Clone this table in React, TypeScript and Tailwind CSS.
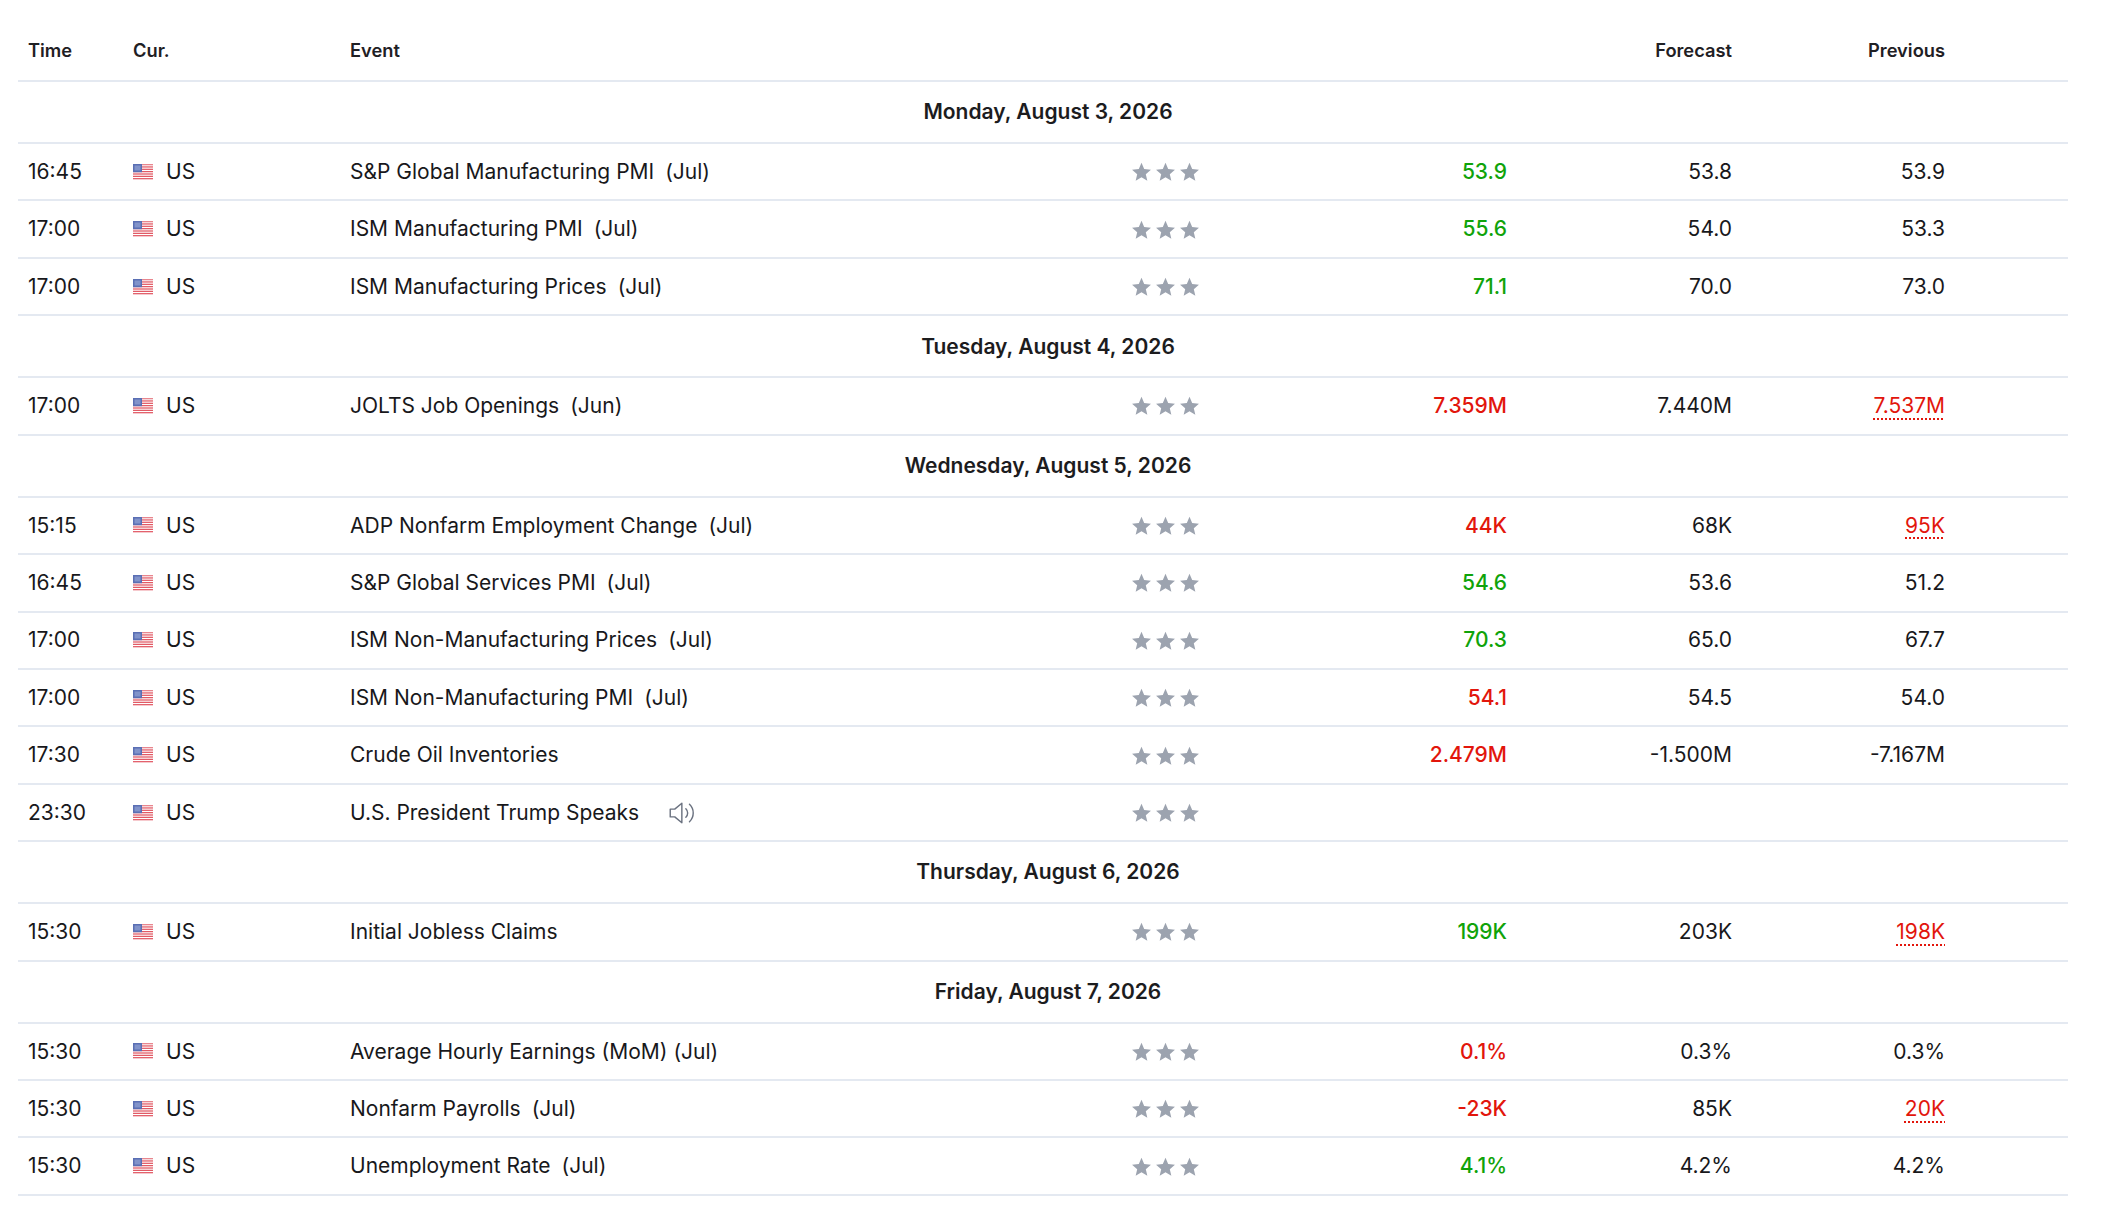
import React from "react";

type Tone = "up" | "down" | "flat";

interface CalendarEvent {
  time: string;
  name: string;
  period?: string;
  tightPeriod?: boolean;
  speech?: boolean;
  actual?: string;
  actualTone?: Tone;
  forecast?: string;
  previous?: string;
  previousRevised?: boolean;
}

interface CalendarDay {
  label: string;
  events: CalendarEvent[];
}

const days: CalendarDay[] = [
  {
    label: "Monday, August 3, 2026",
    events: [
      { time: "16:45", name: "S&P Global Manufacturing PMI", period: "(Jul)", actual: "53.9", actualTone: "up", forecast: "53.8", previous: "53.9" },
      { time: "17:00", name: "ISM Manufacturing PMI", period: "(Jul)", actual: "55.6", actualTone: "up", forecast: "54.0", previous: "53.3" },
      { time: "17:00", name: "ISM Manufacturing Prices", period: "(Jul)", actual: "71.1", actualTone: "up", forecast: "70.0", previous: "73.0" },
    ],
  },
  {
    label: "Tuesday, August 4, 2026",
    events: [
      { time: "17:00", name: "JOLTS Job Openings", period: "(Jun)", actual: "7.359M", actualTone: "down", forecast: "7.440M", previous: "7.537M", previousRevised: true },
    ],
  },
  {
    label: "Wednesday, August 5, 2026",
    events: [
      { time: "15:15", name: "ADP Nonfarm Employment Change", period: "(Jul)", actual: "44K", actualTone: "down", forecast: "68K", previous: "95K", previousRevised: true },
      { time: "16:45", name: "S&P Global Services PMI", period: "(Jul)", actual: "54.6", actualTone: "up", forecast: "53.6", previous: "51.2" },
      { time: "17:00", name: "ISM Non-Manufacturing Prices", period: "(Jul)", actual: "70.3", actualTone: "up", forecast: "65.0", previous: "67.7" },
      { time: "17:00", name: "ISM Non-Manufacturing PMI", period: "(Jul)", actual: "54.1", actualTone: "down", forecast: "54.5", previous: "54.0" },
      { time: "17:30", name: "Crude Oil Inventories", actual: "2.479M", actualTone: "down", forecast: "-1.500M", previous: "-7.167M" },
      { time: "23:30", name: "U.S. President Trump Speaks", speech: true },
    ],
  },
  {
    label: "Thursday, August 6, 2026",
    events: [
      { time: "15:30", name: "Initial Jobless Claims", actual: "199K", actualTone: "up", forecast: "203K", previous: "198K", previousRevised: true },
    ],
  },
  {
    label: "Friday, August 7, 2026",
    events: [
      { time: "15:30", name: "Average Hourly Earnings (MoM)", period: "(Jul)", tightPeriod: true, actual: "0.1%", actualTone: "down", forecast: "0.3%", previous: "0.3%" },
      { time: "15:30", name: "Nonfarm Payrolls", period: "(Jul)", actual: "-23K", actualTone: "down", forecast: "85K", previous: "20K", previousRevised: true },
      { time: "15:30", name: "Unemployment Rate", period: "(Jul)", actual: "4.1%", actualTone: "up", forecast: "4.2%", previous: "4.2%" },
    ],
  },
];

// shared column template so header and rows line up
const cols = "grid grid-cols-[115px_217px_781px_68px_308px_225px_213px_1fr]";

function UsFlag() {
  return (
    <svg width="20" height="16" viewBox="0 0 20 16" className="shrink-0">
      {Array.from({ length: 7 }).map((_, i) => (
        <rect key={i} x="0" y={i * 2.35} width="20" height="1.2" fill="#e0525e" />
      ))}
      <rect x="0" y="0.6" width="20" height="1" fill="#f6d5d8" />
      <rect x="0" y="0" width="9" height="8.2" fill="#5a6fb4" />
      <rect x="1.5" y="1.5" width="6" height="5" fill="#a3b0dc" opacity="0.55" />
    </svg>
  );
}

function Star() {
  return (
    <svg width="21" height="21" viewBox="0 0 20 20" className="shrink-0">
      <path
        d="M10 0.8l2.55 5.9 6.45.6-4.9 4.3 1.45 6.3L10 14.6l-5.55 3.3 1.45-6.3L1 7.3l6.45-.6z"
        fill="#9ca3af"
      />
    </svg>
  );
}

function SpeakerIcon() {
  return (
    <svg width="31" height="30" viewBox="0 0 24 23" fill="none" stroke="#6b7280" strokeWidth="1.1" strokeLinejoin="round" strokeLinecap="round">
      <path d="M2.5 8.5h3.5l5.5-4.5v15l-5.5-4.5H2.5z" />
      <path d="M14.6 8.2a4.6 4.6 0 0 1 0 6.6" />
      <path d="M17.4 4.8a9.2 9.2 0 0 1 0 13.4" />
    </svg>
  );
}

function toneClass(tone?: Tone) {
  if (tone === "up") return "text-[#10a30a]";
  if (tone === "down") return "text-[#e2160c]";
  return "text-[#1c1c1e]";
}

function EventRow({ ev }: { ev: CalendarEvent }) {
  return (
    <div className={`${cols} h-[57.43px] items-center border-b-2 border-[#e4e9f1] text-[21px] text-[#18181b]`}>
      <div className="pl-[10px]">{ev.time}</div>
      <div className="flex items-center gap-[13px]">
        <UsFlag />
        <span>US</span>
      </div>
      <div className="flex items-center whitespace-nowrap">
        <span>{ev.name}</span>
        {ev.period && (
          <span className={ev.tightPeriod ? "ml-[6px]" : "ml-[11px]"}>{ev.period}</span>
        )}
        {ev.speech && (
          <span className="ml-[28px] flex items-center">
            <SpeakerIcon />
          </span>
        )}
      </div>
      <div className="flex items-center gap-[3px] pt-[2px]">
        <Star />
        <Star />
        <Star />
      </div>
      <div className={`text-right font-medium ${toneClass(ev.actualTone)}`}>{ev.actual ?? ""}</div>
      <div className="text-right">{ev.forecast ?? ""}</div>
      <div className="text-right">
        {ev.previous &&
          (ev.previousRevised ? (
            <span className="text-[#e2160c] underline decoration-dotted decoration-2 underline-offset-[5px] decoration-[#e2160c]">
              {ev.previous}
            </span>
          ) : (
            ev.previous
          ))}
      </div>
      <div />
    </div>
  );
}

export default function App() {
  return (
    <div
      className="min-h-screen bg-white pl-[18px]"
      style={{ fontFamily: "Inter, 'Noto Sans', 'Liberation Sans', sans-serif" }}
    >
      <div className="w-[2050px]">
        {/* column header */}
        <div className={`${cols} h-[82px] items-end border-b-2 border-[#e4e9f1] pb-[20px] text-[18.3px] font-semibold leading-[20px] text-[#1f2024]`}>
          <div className="pl-[10px]">Time</div>
          <div>Cur.</div>
          <div>Event</div>
          <div />
          <div />
          <div className="text-right">Forecast</div>
          <div className="text-right">Previous</div>
          <div />
        </div>

        {days.map((day) => (
          <div key={day.label}>
            <div className="flex h-[62px] items-center justify-center border-b-2 border-[#e4e9f1] pl-[10px] text-[21px] font-semibold text-[#1c1c1e]">
              {day.label}
            </div>
            {day.events.map((ev, i) => (
              <EventRow key={i} ev={ev} />
            ))}
          </div>
        ))}
      </div>
    </div>
  );
}
